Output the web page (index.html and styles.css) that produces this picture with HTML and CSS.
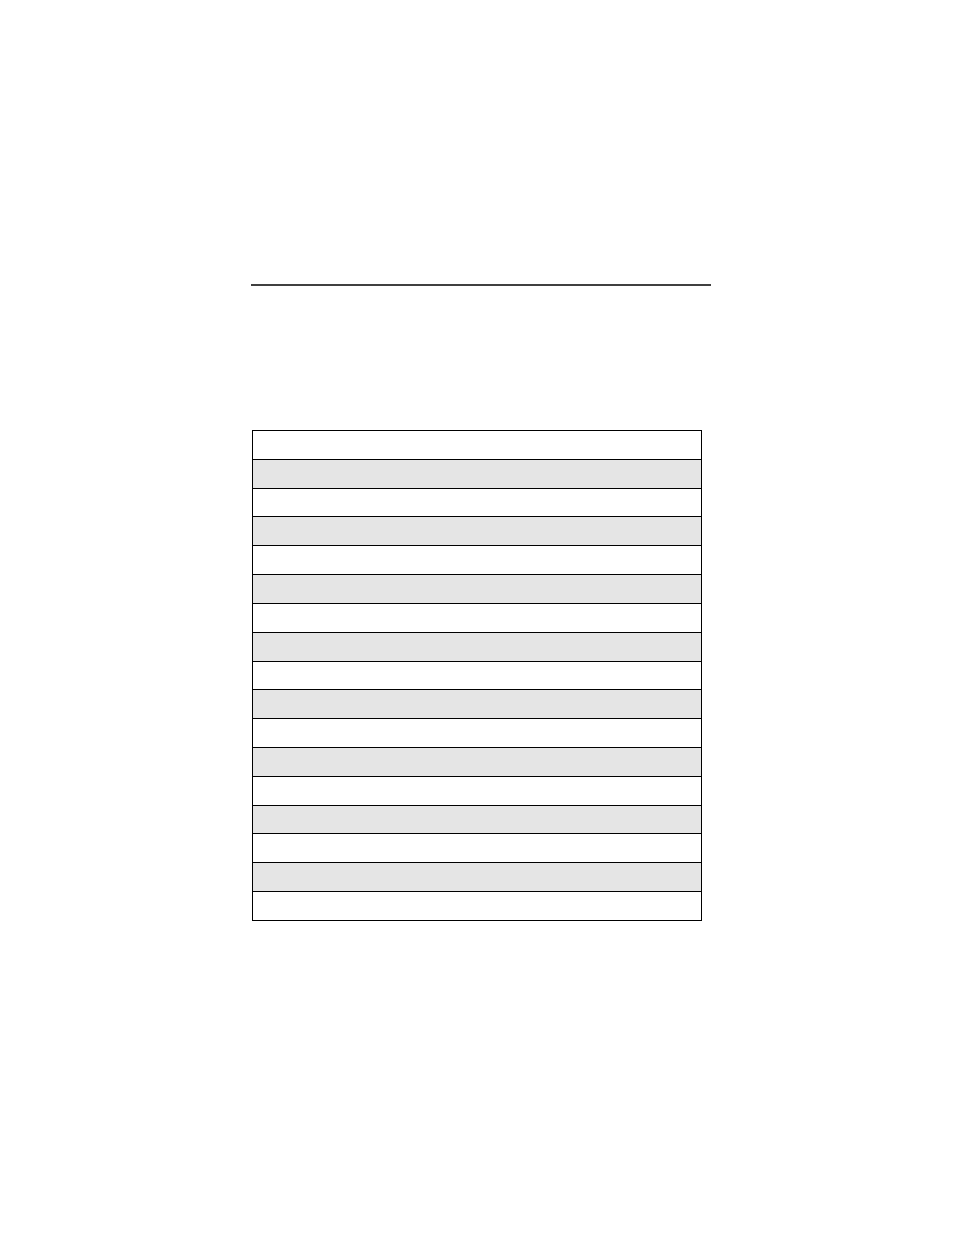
FILE: index.html
```html
<!DOCTYPE html>
<html>
<head>
<meta charset="utf-8">
<link rel="stylesheet" href="styles.css">
</head>
<body>
<div class="page">
  <hr class="rule">
  <div class="grid">
    <div class="row"></div>
    <div class="row alt"></div>
    <div class="row"></div>
    <div class="row alt"></div>
    <div class="row"></div>
    <div class="row alt"></div>
    <div class="row"></div>
    <div class="row alt"></div>
    <div class="row"></div>
    <div class="row alt"></div>
    <div class="row"></div>
    <div class="row alt"></div>
    <div class="row"></div>
    <div class="row alt"></div>
    <div class="row"></div>
    <div class="row alt"></div>
    <div class="row"></div>
  </div>
</div>
</body>
</html>
```
FILE: styles.css
```css
html, body {
  margin: 0;
  padding: 0;
  background: #ffffff;
  font-family: "Liberation Sans", Arial, sans-serif;
}
.page {
  width: 954px;
  height: 1235px;
  padding-top: 284px;
  box-sizing: border-box;
}
.rule {
  margin: 0 0 0 251px;
  width: 460px;
  height: 2px;
  border: 0;
  background: #404040;
}
.grid {
  margin: 144px 0 0 252px;
  width: 450px;
  box-sizing: border-box;
  border: 1px solid #000000;
  border-bottom: 0;
  display: flex;
  flex-direction: column;
}
.row {
  height: 28.82px;
  box-sizing: border-box;
  border-bottom: 1px solid #000000;
  background: #ffffff;
}
.row.alt {
  background: #e5e5e5;
}
```
